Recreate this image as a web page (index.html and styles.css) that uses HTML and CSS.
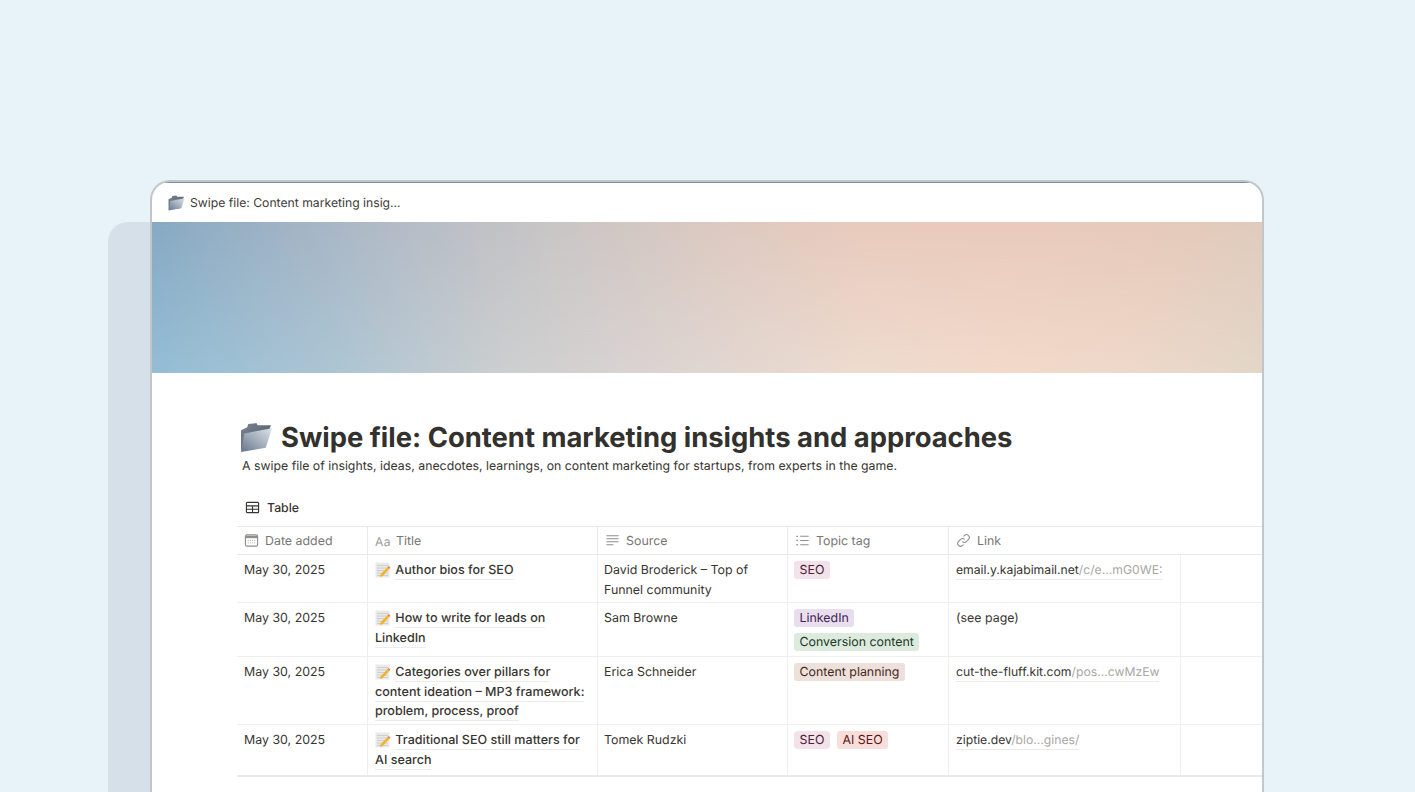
FILE: index.html
```html
<!DOCTYPE html>
<html lang="en">
<head>
<meta charset="utf-8">
<title>Swipe file</title>
<link rel="stylesheet" href="styles.css">
</head>
<body>
<svg class="defs" width="0" height="0" aria-hidden="true">
  <defs>
    <linearGradient id="fb" x1="0" y1="0" x2="1" y2="1"><stop offset="0" stop-color="#7b8594"/><stop offset="1" stop-color="#4a5564"/></linearGradient>
    <linearGradient id="ff" x1="1" y1="0" x2="0" y2="1"><stop offset="0" stop-color="#dde2e8"/><stop offset=".5" stop-color="#a3afbd"/><stop offset="1" stop-color="#66748a"/></linearGradient>
    <symbol id="folder" viewBox="0 0 32 30">
      <path d="M1 9l0 19 21-2 8-22-13 0-1-2-8 1-1 3z" fill="url(#fb)" transform="translate(0 -1)"/>
      <path d="M4 11L31 6 25 25 1 29z" fill="url(#ff)"/>
    </symbol>
    <symbol id="memo" viewBox="0 0 16 16">
      <rect x="0.5" y="0.5" width="14" height="15" fill="#eceae6"/>
      <path d="M2 3.500h11M2 6h11M2 8.500h11M2 11h11M2 13.500h11" stroke="#c4c6ca" stroke-width=".8"/>
      <path d="M5.500 12.500L12.500 5l2 1.800L7.500 14.200l-2.500.8z" fill="#efb531"/>
      <path d="M12.500 5l1-1 2 1.800-1 1z" fill="#e2706a"/>
    </symbol>
  </defs>
</svg>
<div class="backdrop"></div>
<main class="window">
  <header class="tabbar">
    <svg class="tab-icon"><use href="#folder"/></svg>
    <span>Swipe file: Content marketing insig...</span>
  </header>
  <div class="cover"></div>
  <section class="page">
    <h1 class="title"><svg class="title-icon"><use href="#folder"/></svg><span>Swipe file: Content marketing insights and approaches</span></h1>
    <p class="desc">A swipe file of insights, ideas, anecdotes, learnings, on content marketing for startups, from experts in the game.</p>
    <div class="view">
      <svg class="view-icon" viewBox="0 0 16 16"><path d="M2.500 2.500h11a1 1 0 0 1 1 1v9a1 1 0 0 1-1 1h-11a1 1 0 0 1-1-1v-9a1 1 0 0 1 1-1zM1.500 6.200h13M1.500 9.800h13M8 6.200v7.300" fill="none" stroke="#37352f" stroke-width="1.200"/></svg>
      <span>Table</span>
    </div>
    <div class="table">
      <div class="row head">
        <div class="cell"><svg class="hicon" viewBox="0 0 16 16"><rect x="1.500" y="2" width="13" height="12" rx="1.500" fill="none" stroke="#8f8e8a" stroke-width="1.200"/><path d="M2 3h12v2.500H2z" fill="#8f8e8a"/><path d="M4 8h8M4 10.500h8" stroke="#b5b4b0" stroke-dasharray="1.200 1"/></svg>Date added</div>
        <div class="cell"><span class="aa">Aa</span>Title</div>
        <div class="cell"><svg class="hicon" viewBox="0 0 16 16"><path d="M1.500 3h13M1.500 6.200h13M1.500 9.400h13M1.500 12.600h7.500" stroke="#8f8e8a" stroke-width="1.100"/></svg>Source</div>
        <div class="cell"><svg class="hicon" viewBox="0 0 16 16"><path d="M5.500 3.500h9M5.500 8h9M5.500 12.500h9" stroke="#8f8e8a" stroke-width="1.100"/><path d="M1.500 3.500h1.600M1.500 8h1.600M1.500 12.500h1.600" stroke="#8f8e8a" stroke-width="1.400"/></svg>Topic tag</div>
        <div class="cell"><svg class="hicon" viewBox="0 0 16 16"><path d="M6.700 9.300a3 3 0 0 0 4.300 0l2.300-2.300a3 3 0 0 0-4.300-4.300L8 3.700M9.300 6.700a3 3 0 0 0-4.300 0L2.700 9a3 3 0 0 0 4.300 4.300l1-1" fill="none" stroke="#8f8e8a" stroke-width="1.100"/></svg>Link</div>
        <div class="cell"></div>
      </div>
      <div class="row r1">
        <div class="cell">May 30, 2025</div>
        <div class="cell name"><svg class="memo"><use href="#memo"/></svg> <span class="ul">Author bios for SEO</span></div>
        <div class="cell source">David Broderick – Top of Funnel community</div>
        <div class="cell tags"><span class="tag pink">SEO</span></div>
        <div class="cell"><span class="url">email.y.kajabimail.net<i>/c/e...mG0WE:</i></span></div>
        <div class="cell"></div>
      </div>
      <div class="row r2">
        <div class="cell">May 30, 2025</div>
        <div class="cell name"><svg class="memo"><use href="#memo"/></svg> <span class="ul">How to write for leads on LinkedIn</span></div>
        <div class="cell source">Sam Browne</div>
        <div class="cell tags"><span class="tag purple">LinkedIn</span><span class="tag green">Conversion content</span></div>
        <div class="cell">(see page)</div>
        <div class="cell"></div>
      </div>
      <div class="row r3">
        <div class="cell">May 30, 2025</div>
        <div class="cell name"><svg class="memo"><use href="#memo"/></svg> <span class="ul">Categories over pillars for content ideation – MP3 framework: problem, process, proof</span></div>
        <div class="cell source">Erica Schneider</div>
        <div class="cell tags"><span class="tag brown">Content planning</span></div>
        <div class="cell"><span class="url">cut-the-fluff.kit.com<i>/pos...cwMzEw</i></span></div>
        <div class="cell"></div>
      </div>
      <div class="row r4">
        <div class="cell">May 30, 2025</div>
        <div class="cell name"><svg class="memo"><use href="#memo"/></svg> <span class="ul">Traditional SEO still matters for AI search</span></div>
        <div class="cell source">Tomek Rudzki</div>
        <div class="cell tags"><span class="tag pink">SEO</span><span class="tag red">AI SEO</span></div>
        <div class="cell"><span class="url">ziptie.dev<i>/blo...gines/</i></span></div>
        <div class="cell"></div>
      </div>
    </div>
  </section>
</main>
</body>
</html>
```
FILE: styles.css
```css
* { box-sizing: border-box; }
html, body { margin: 0; height: 792px; overflow: hidden; }
body {
  position: relative;
  background: #e8f3f9;
  padding: 180px 0 0 150px;
  font-family: Inter, "Liberation Sans", sans-serif;
  color: #37352f;
  text-rendering: geometricPrecision;
}
.defs { position: absolute; }
.backdrop {
  position: absolute;
  left: 108px;
  top: 222px;
  width: 60px;
  height: 570px;
  background: #d6e0e8;
  border-radius: 20px 0 0 0;
}
.window {
  position: relative;
  width: 1114px;
  height: 612px;
  background: #fff;
  border: 2px solid #c3c6c9;
  border-bottom: 0;
  border-radius: 20px 20px 0 0;
  overflow: hidden;
}
.window::before {
  content: "";
  display: block;
  height: 1px;
  margin: 0 12px;
  background: #6f8fb8;
}
.tabbar {
  height: 39px;
  display: flex;
  align-items: center;
  gap: 5px;
  padding: 0 0 0 16px;
  font-size: 12.200px;
  color: #3d3c38;
}
.tab-icon { width: 17px; height: 16px; }
.cover {
  position: relative;
  height: 151px;
  background: linear-gradient(90deg, #94bed6 0%, #acc5d4 16%, #cdcfd0 32%, #dcd4d2 45%, #eedccf 64%, #f3dacb 76%, #efd9ca 88%, #e3d7c8 100%);
}
.cover::after {
  content: "";
  position: absolute;
  inset: 0;
  background: linear-gradient(90deg, #86a9c3 0%, #a0b3c4 12%, #b3bbc6 22%, #c8c5c5 36%, #dcc9c0 51%, #e8cabc 64%, #e8cabc 80%, #e6c9ba 90%, #dfcbbc 100%);
  -webkit-mask-image: linear-gradient(180deg, #000 0%, transparent 100%);
  mask-image: linear-gradient(180deg, #000 0%, transparent 100%);
}
.page { padding-left: 85px; }
.title {
  margin: 46px 0 0;
  padding-left: 3px;
  display: flex;
  align-items: center;
  gap: 8px;
  height: 36px;
  font-size: 27.400px;
  font-weight: 700;
  line-height: 36px;
  color: #32312d;
  white-space: nowrap;
}
.title-icon { width: 33px; height: 31px; flex: none; }
.desc {
  margin: 1px 0 0;
  padding-left: 5px;
  font-size: 12.300px;
  line-height: 20px;
  color: #37352f;
}
.view {
  margin-top: 13px;
  height: 37px;
  display: flex;
  align-items: center;
  gap: 7px;
  padding: 0 0 1px 8px;
  font-size: 12.300px;
  font-weight: 500;
}
.view-icon { width: 15px; height: 15px; }
.table { border-top: 1px solid #e9e9e7; border-bottom: 2px solid #e9e9e7; }
.row {
  display: grid;
  grid-template-columns: 131px 230px 190px 161px 232px 81px;
  border-bottom: 1px solid #efefed;
  font-size: 12.400px;
  line-height: 19.500px;
}
.row:last-child { border-bottom: 0; }
.cell {
  padding: 5px 7px 0;
  border-right: 1px solid #efefed;
  min-width: 0;
}
.cell:last-child { border-right: 0; }
.source { padding-left: 6px; }
.head { height: 28px; color: #787774; border-bottom-color: #e9e9e7; }
.head .cell { display: flex; align-items: center; gap: 6px; padding: 0 7px; border-right-color: #e9e9e7; }
.head .cell:nth-child(5), .head .cell:nth-child(6) { border-right: 0; }
.hicon { width: 15px; height: 15px; flex: none; }
.aa { width: 15px; font-size: 12px; color: #9b9a97; letter-spacing: .5px; padding-top: 2px; flex: none; }
.r1 { height: 48px; }
.r2 { height: 54px; }
.r3 { height: 68px; }
.r4 { height: 50px; }
.name { padding-top: 6px; font-size: 12.550px; font-weight: 500; }
.ul { border-bottom: 1px solid #ececea; padding-bottom: 1px; }
.memo { width: 16px; height: 16px; vertical-align: -4px; margin-right: 1px; }
.tags { display: flex; flex-wrap: wrap; align-items: flex-start; align-content: flex-start; gap: 5.500px 7px; padding: 6px 0 0 6px; }
.tag { height: 18px; line-height: 18px; padding: 0 5.500px; border-radius: 3px; white-space: nowrap; }
.pink { background: #f3e2ea; color: #4c2337; }
.purple { background: #e8deee; color: #412454; }
.green { background: #dcebdd; color: #1c3829; }
.brown { background: #eee0da; color: #442a1e; }
.red { background: #f8dedb; color: #5d1715; }
.url { display: inline-block; border-bottom: 1px solid #ececea; line-height: 18px; white-space: nowrap; font-size: 12.200px; }
.url i { font-style: normal; color: #a8a7a4; }
```
